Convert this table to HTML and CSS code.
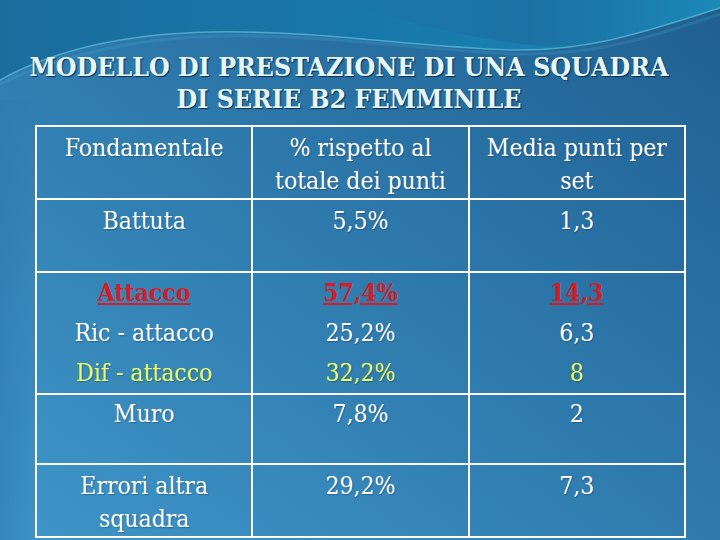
FILE: index.html
```
<!DOCTYPE html>
<html lang="it">
<head>
<meta charset="utf-8">
<title>Modello di prestazione</title>
<link rel="stylesheet" href="styles.css">
</head>
<body>
<svg class="bg" viewBox="0 0 720 540" preserveAspectRatio="none" aria-hidden="true">
  <defs>
    <linearGradient id="base" x1="0" y1="1" x2="1" y2="0">
      <stop offset="0" stop-color="#3f96c9"/>
      <stop offset="0.55" stop-color="#2d78ab"/>
      <stop offset="1" stop-color="#1f5f90"/>
    </linearGradient>
    <linearGradient id="top" x1="0" y1="0" x2="1" y2="0">
      <stop offset="0" stop-color="#1b6d9e"/>
      <stop offset="0.5" stop-color="#1877a9"/>
      <stop offset="1" stop-color="#1b89b8"/>
    </linearGradient>
    <linearGradient id="band" x1="0" y1="0" x2="1" y2="0">
      <stop offset="0" stop-color="#236a9c" stop-opacity="0"/>
      <stop offset="0.5" stop-color="#1e6294" stop-opacity="0.8"/>
      <stop offset="1" stop-color="#1e6294" stop-opacity="0"/>
    </linearGradient>
    <linearGradient id="side" x1="0" y1="0" x2="1" y2="0">
      <stop offset="0" stop-color="#2b78ae" stop-opacity="0.5"/>
      <stop offset="1" stop-color="#2b78ae" stop-opacity="0"/>
    </linearGradient>
  </defs>
  <rect width="720" height="540" fill="url(#base)"/>
  <rect y="100" width="40" height="440" fill="url(#side)"/>
  <path d="M0,0 H720 V8 C650,30 590,52 510,50 C410,47 320,30 210,32 C120,34 50,52 0,80 Z" fill="url(#top)"/>
  <path d="M330,0 C400,20 460,38 540,46 C600,50 660,30 720,10 V0 Z" fill="url(#band)" opacity="0.6"/>
  <path d="M0,80 C50,52 120,34 210,32 C320,30 410,47 510,50 C590,52 650,30 720,8" fill="none" stroke="#6fd6ec" stroke-width="1.5" stroke-opacity="0.55"/>
  <path d="M0,84 C60,56 130,38 220,36 C330,34 420,50 515,54 C600,56 660,34 720,14" fill="none" stroke="#4fbfe0" stroke-width="3" stroke-opacity="0.18"/>
</svg>

<h1 class="title">MODELLO DI PRESTAZIONE DI UNA SQUADRA<br>DI SERIE B2 FEMMINILE</h1>

<table class="stats">
  <colgroup><col class="c"><col class="c"><col class="c"></colgroup>
  <tr class="r1">
    <td>Fondamentale</td>
    <td>% rispetto al<br>totale dei punti</td>
    <td>Media punti per<br>set</td>
  </tr>
  <tr class="r2">
    <td>Battuta</td>
    <td>5,5%</td>
    <td>1,3</td>
  </tr>
  <tr class="r3">
    <td><span class="hot">Attacco</span><br>Ric - attacco<br><span class="yel">Dif - attacco</span></td>
    <td><span class="hot">57,4%</span><br>25,2%<br><span class="yel">32,2%</span></td>
    <td><span class="hot">14,3</span><br>6,3<br><span class="yel">8</span></td>
  </tr>
  <tr class="r4">
    <td>Muro</td>
    <td>7,8%</td>
    <td>2</td>
  </tr>
  <tr class="r5">
    <td>Errori altra<br>squadra</td>
    <td>29,2%</td>
    <td>7,3</td>
  </tr>
</table>
</body>
</html>
```
FILE: styles.css
```
html, body {
  margin: 0;
  padding: 0;
}
body {
  width: 720px;
  height: 540px;
  overflow: hidden;
  position: relative;
  font-family: "DejaVu Serif Condensed", "DejaVu Serif", serif;
  font-stretch: condensed;
  color: #ffffff;
  background: #2d78ab;
}
.bg {
  position: absolute;
  left: 0;
  top: 0;
  width: 720px;
  height: 540px;
  z-index: 0;
}
.title {
  position: relative;
  z-index: 1;
  margin: 0;
  padding: 51px 22px 0 0;
  font-size: 26.5px;
  line-height: 32px;
  font-weight: bold;
  white-space: nowrap;
  text-align: center;
  color: #e3f8fc;
  text-shadow: 1px 1px 1px rgba(5, 30, 60, 0.85);
}
.stats {
  position: relative;
  z-index: 1;
  margin: 10px 0 0 35px;
  width: 651px;
  table-layout: fixed;
  border-collapse: collapse;
  border: 2px solid #ffffff;
  font-size: 24.5px;
  line-height: 33px;
}
.stats .c {
  width: 33.333%;
}
.stats td {
  border: 2px solid #ffffff;
  padding: 4px 0 0;
  vertical-align: top;
  text-align: center;
  white-space: nowrap;
  text-shadow: 1px 1px 1px rgba(10, 40, 70, 0.35);
}
.r1 td { height: 67px; }
.r2 td { height: 67px; }
.r3 td { height: 117px; line-height: 40px; padding-top: 0; }
.r4 td { height: 66px; padding-top: 2px; }
.r5 td { height: 67px; }
.hot {
  color: #d81c26;
  font-weight: bold;
  text-decoration: underline;
  text-shadow: none;
}
.yel {
  color: #eeff66;
}
```
